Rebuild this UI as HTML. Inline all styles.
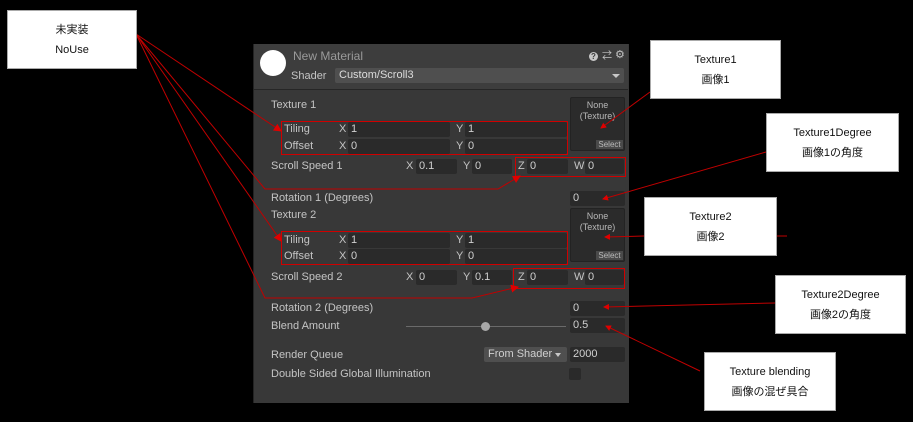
<!DOCTYPE html>
<html><head><meta charset="utf-8"><style>
body{margin:0;width:913px;height:422px;background:#000;position:relative;overflow:hidden;font-family:"Liberation Sans","Noto Sans CJK JP",sans-serif}
.a{position:absolute}
.panel{left:253px;top:44px;width:375px;height:359px;background:#383838;border-left:1px solid #232323}
.hdr{left:254px;top:44px;width:374px;height:45px;background:#3d3d3d;border-bottom:1px solid #262626}
.t{position:absolute;color:#c4c4c4;font-size:11px;line-height:13px;white-space:nowrap}
.f{position:absolute;background:#2a2a2a;border-radius:2px;color:#d0d0d0;font-size:11px;line-height:15px;padding-left:3px;box-sizing:border-box;height:15px}
.rb{position:absolute;border:1px solid #d00000;box-sizing:border-box}
.cb{position:absolute;background:#fff;border:1px solid #aaa;box-sizing:border-box;text-align:center;font-size:11px;color:#111;line-height:20px;padding-top:9px}
.tex{position:absolute;background:#2b2b2b;border:1px solid #232323;border-radius:2px;box-sizing:border-box;color:#b8b8b8;font-size:9px;text-align:center;line-height:11px;padding-top:2px}
.sel{position:absolute;right:1px;bottom:1px;width:27px;height:9px;background:#4a4a4a;font-size:8px;line-height:9px;color:#bbb}
</style></head><body>
<div class="a panel"></div>
<div class="a hdr"></div>
<div class="a" style="left:260px;top:50px;width:26px;height:26px;border-radius:50%;background:#fff"></div>
<div class="t" style="left:293px;top:50px;font-size:12px;color:#9a9a9a">New Material</div>
<div class="t" style="left:291px;top:70px">Shader</div>
<div class="a" style="left:335px;top:68px;width:289px;height:15px;background:#4f4f4f;border-radius:2px"></div>
<div class="t" style="left:339px;top:69px;color:#dcdcdc">Custom/Scroll3</div>
<div class="a" style="left:612px;top:74px;width:0;height:0;border-left:4px solid transparent;border-right:4px solid transparent;border-top:4px solid #c8c8c8"></div>
<div class="a" style="left:589px;top:52px;width:9px;height:9px;border-radius:50%;background:#c8c8c8;font-size:8px;line-height:9px;text-align:center;color:#3d3d3d;font-weight:bold">?</div>
<div class="t" style="left:602px;top:50px;font-size:10px">⇄</div>
<div class="t" style="left:615px;top:49px;font-size:11px">⚙</div>

<div class="t" style="left:271px;top:99px">Texture 1</div>
<div class="t" style="left:284px;top:123px">Tiling</div>
<div class="t" style="left:339px;top:123px">X</div><div class="f" style="left:348px;top:122px;width:102px">1</div>
<div class="t" style="left:456px;top:123px">Y</div><div class="f" style="left:465px;top:122px;width:102px">1</div>
<div class="t" style="left:284px;top:140px">Offset</div>
<div class="t" style="left:339px;top:140px">X</div><div class="f" style="left:348px;top:139px;width:102px">0</div>
<div class="t" style="left:456px;top:140px">Y</div><div class="f" style="left:465px;top:139px;width:102px">0</div>
<div class="tex" style="left:570px;top:97px;width:55px;height:54px">None<br>(Texture)<div class="sel">Select</div></div>
<div class="t" style="left:271px;top:160px">Scroll Speed 1</div>
<div class="t" style="left:406px;top:160px">X</div><div class="f" style="left:416px;top:159px;width:41px">0.1</div>
<div class="t" style="left:463px;top:160px">Y</div><div class="f" style="left:472px;top:159px;width:40px">0</div>
<div class="t" style="left:518px;top:160px">Z</div><div class="f" style="left:527px;top:159px;width:41px">0</div>
<div class="t" style="left:574px;top:160px">W</div><div class="f" style="left:585px;top:159px;width:39px">0</div>
<div class="t" style="left:271px;top:192px">Rotation 1 (Degrees)</div>
<div class="f" style="left:570px;top:191px;width:55px">0</div>
<div class="t" style="left:271px;top:209px">Texture 2</div>
<div class="tex" style="left:570px;top:208px;width:55px;height:54px">None<br>(Texture)<div class="sel">Select</div></div>
<div class="t" style="left:284px;top:234px">Tiling</div>
<div class="t" style="left:339px;top:234px">X</div><div class="f" style="left:348px;top:233px;width:102px">1</div>
<div class="t" style="left:456px;top:234px">Y</div><div class="f" style="left:465px;top:233px;width:102px">1</div>
<div class="t" style="left:284px;top:250px">Offset</div>
<div class="t" style="left:339px;top:250px">X</div><div class="f" style="left:348px;top:249px;width:102px">0</div>
<div class="t" style="left:456px;top:250px">Y</div><div class="f" style="left:465px;top:249px;width:102px">0</div>
<div class="t" style="left:271px;top:271px">Scroll Speed 2</div>
<div class="t" style="left:406px;top:271px">X</div><div class="f" style="left:416px;top:270px;width:41px">0</div>
<div class="t" style="left:463px;top:271px">Y</div><div class="f" style="left:472px;top:270px;width:40px">0.1</div>
<div class="t" style="left:518px;top:271px">Z</div><div class="f" style="left:527px;top:270px;width:41px">0</div>
<div class="t" style="left:574px;top:271px">W</div><div class="f" style="left:585px;top:270px;width:39px">0</div>
<div class="t" style="left:271px;top:302px">Rotation 2 (Degrees)</div>
<div class="f" style="left:570px;top:301px;width:55px">0</div>
<div class="t" style="left:271px;top:320px">Blend Amount</div>
<div class="a" style="left:406px;top:326px;width:160px;height:1px;background:#6a6a6a"></div>
<div class="a" style="left:481px;top:322px;width:9px;height:9px;border-radius:50%;background:#a8a8a8"></div>
<div class="f" style="left:570px;top:318px;width:55px">0.5</div>
<div class="t" style="left:271px;top:349px">Render Queue</div>
<div class="a" style="left:484px;top:347px;width:83px;height:15px;background:#4f4f4f;border-radius:2px"></div>
<div class="t" style="left:488px;top:348px;color:#d0d0d0">From Shader</div>
<div class="a" style="left:555px;top:353px;width:0;height:0;border-left:3px solid transparent;border-right:3px solid transparent;border-top:4px solid #c8c8c8"></div>
<div class="f" style="left:570px;top:347px;width:55px">2000</div>
<div class="t" style="left:271px;top:368px">Double Sided Global Illumination</div>
<div class="a" style="left:569px;top:368px;width:12px;height:12px;background:#2a2a2a;border-radius:2px"></div>

<div class="rb" style="left:281px;top:121px;width:287px;height:34px"></div>
<div class="rb" style="left:515px;top:157px;width:111px;height:20px"></div>
<div class="rb" style="left:281px;top:231px;width:287px;height:34px"></div>
<div class="rb" style="left:513px;top:268px;width:112px;height:21px"></div>

<svg class="a" style="left:0;top:0" width="913" height="422">
<defs><marker id="m" markerWidth="8" markerHeight="8" refX="7" refY="4" orient="auto" markerUnits="userSpaceOnUse"><path d="M0,0 L8,4 L0,8z" fill="#e00000"/></marker>
<marker id="s" markerWidth="6" markerHeight="6" refX="5" refY="3" orient="auto" markerUnits="userSpaceOnUse"><path d="M0,0 L6,3 L0,6z" fill="#e00000"/></marker></defs>
<g stroke="#c00000" stroke-width="1" fill="none">
<path d="M136,34 L281,131" marker-end="url(#m)"/>
<path d="M136,34 L265,189 L498,189 L520,176" marker-end="url(#m)"/>
<path d="M136,34 L281,241" marker-end="url(#m)"/>
<path d="M136,34 L265,298 L472,298 L518,287" marker-end="url(#m)"/>
<path d="M650,92 L601,128" marker-end="url(#s)"/>
<path d="M766,152 L603,199" marker-end="url(#s)"/>
<path d="M644,236 L605,237" marker-end="url(#s)"/>
<path d="M776,236 L787,236"/>
<path d="M775,303 L604,307" marker-end="url(#s)"/>
<path d="M700,371 L606,326" marker-end="url(#s)"/>
</g></svg>

<div class="cb" style="left:7px;top:10px;width:130px;height:59px">未実装<br>NoUse</div>
<div class="cb" style="left:650px;top:40px;width:131px;height:59px">Texture1<br>画像1</div>
<div class="cb" style="left:766px;top:113px;width:133px;height:59px">Texture1Degree<br>画像1の角度</div>
<div class="cb" style="left:644px;top:197px;width:133px;height:59px">Texture2<br>画像2</div>
<div class="cb" style="left:775px;top:275px;width:131px;height:59px">Texture2Degree<br>画像2の角度</div>
<div class="cb" style="left:704px;top:352px;width:132px;height:59px">Texture blending<br>画像の混ぜ具合</div>
</body></html>
